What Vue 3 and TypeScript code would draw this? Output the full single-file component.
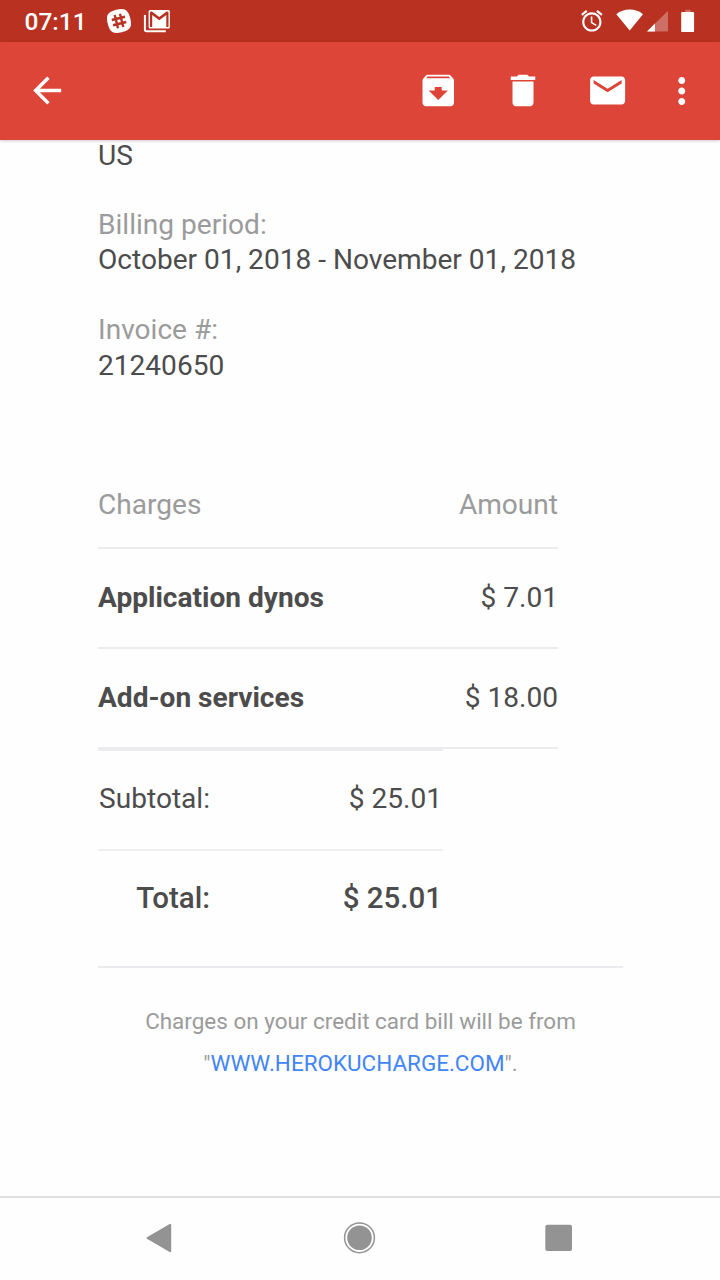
<script setup lang="ts">
interface Detail { label?: string; value: string }
interface Charge { name: string; amount: string }

const details: Detail[] = [
  { value: 'US' },
  { label: 'Billing period:', value: 'October 01, 2018 - November 01, 2018' },
  { label: 'Invoice #:', value: '21240650' },
]
const charges: Charge[] = [
  { name: 'Application dynos', amount: '$ 7.01' },
  { name: 'Add-on services', amount: '$ 18.00' },
]
const actions: { name: string; box: string; path: string }[] = [
  {
    name: 'archive',
    box: '-0.15 -0.25 24 24',
    path: 'M20.54 5.23l-1.39-1.68C18.88 3.21 18.47 3 18 3H6c-.47 0-.88.21-1.16.55L3.46 5.23C3.17 5.57 3 6.02 3 6.5V19c0 1.1.9 2 2 2h14c1.1 0 2-.9 2-2V6.5c0-.48-.17-.93-.46-1.27zM12 17.5L6.5 12H10v-2h4v2h3.5L12 17.5zM5.12 5l.81-1h12l.94 1H5.12z',
  },
  {
    name: 'delete',
    box: '0 -0.25 24 24',
    path: 'M6 19c0 1.1.9 2 2 2h8c1.1 0 2-.9 2-2V6.9H6V19zM19 4h-3.5l-1-1h-5l-1 1H5v2h14V4z',
  },
  {
    name: 'unread',
    box: '-0.35 -0.25 24 24',
    path: 'M20 4H4c-1.1 0-1.99.9-1.99 2L2 18c0 1.1.9 2 2 2h16c1.1 0 2-.9 2-2V6c0-1.1-.9-2-2-2zm0 4l-8 5-8-5V6l8 5 8-5v2z',
  },
  {
    name: 'more',
    box: '0.15 0 24 24',
    path: 'M12 8c1.1 0 2-.9 2-2s-.9-2-2-2-2 .9-2 2 .9 2 2 2zm0 2c-1.1 0-2 .9-2 2s.9 2 2 2 2-.9 2-2-.9-2-2-2zm0 6c-1.1 0-2 .9-2 2s.9 2 2 2 2-.9 2-2-.9-2-2-2z',
  },
]
</script>

<template>
  <div class="screen">
    <div class="status">
      <span class="clock">07:11</span>
      <svg class="slack" width="26" height="26" viewBox="0 0 26 26">
        <g transform="rotate(-14 13 13)">
          <path fill="#fff" d="M13 1.4C21.8 1.4 24.6 4.2 24.6 13S21.8 24.6 13 24.6 1.4 21.8 1.4 13 4.2 1.4 13 1.4z" />
          <path fill="none" stroke="#b83121" stroke-width="2.4" d="M10.3 6.2v13.6M15.7 6.2v13.6M6.2 10.3h13.6M6.2 15.7h13.6" />
        </g>
      </svg>
      <svg class="gmail" width="28" height="24" viewBox="-0.4 0 28 24">
        <path fill="none" stroke="#fff" stroke-width="2" d="M1.5 6v14.6q0 1.6 1.6 1.6H22.4" />
        <rect x="5.2" y="1" width="21.3" height="18.6" rx="1.6" fill="#fff" />
        <path fill="#b83121" d="M6.6 18V3.6q0-1.2 1.2-1.2h.7l7.35 5.5 7.35-5.5h.7q1.2 0 1.2 1.2V18h-2.2V6l-7.05 5.2L8.8 6v12z" />
      </svg>
      <svg class="alarm" width="25.7" height="25.7" viewBox="0 0 24 24">
        <path fill="#fff" d="M22 5.72l-4.6-3.86-1.29 1.53 4.6 3.86L22 5.72zM7.88 3.39L6.6 1.86 2 5.71l1.29 1.53 4.59-3.85zM12.5 8H11v6l4.75 2.85.75-1.23-4-2.37V8zM12 4c-4.97 0-9 4.03-9 9s4.02 9 9 9c4.97 0 9-4.03 9-9s-4.03-9-9-9zm0 16c-3.87 0-7-3.13-7-7s3.13-7 7-7 7 3.13 7 7-3.13 7-7 7z" />
      </svg>
      <svg class="signals" width="80" height="24" viewBox="0 0 80 24">
        <path fill="#fff" d="M.3 5.2C4 2.2 8.5.6 13.7.6S23.3 2.2 27 5.2L13.7 21.5z" />
        <path fill="#fff" fill-opacity=".3" d="M52 1.7V22.4H31z" />
        <path fill="#fff" d="M39 14.5V22.4H31z" />
        <path fill="#fff" fill-opacity=".3" d="M69.3.8h5.4v2.4h-5.4z" />
        <rect x="65.2" y="3.1" width="12.9" height="19.9" rx=".8" fill="#fff" />
      </svg>
    </div>

    <header class="toolbar">
      <svg class="back" width="42" height="42" viewBox="-0.1 -0.35 24 24">
        <path fill="#fff" d="M20 11H7.83l5.59-5.59L12 4l-8 8 8 8 1.41-1.41L7.83 13H20v-2z" />
      </svg>
      <svg v-for="a in actions" :key="a.name" :class="a.name" width="42" height="42" :viewBox="a.box">
        <path fill="#fff" :d="a.path" />
      </svg>
    </header>

    <main class="mail">
      <section class="details">
        <div v-for="d in details" :key="d.value" class="detail">
          <div v-if="d.label" class="muted">{{ d.label }}</div>
          <div>{{ d.value }}</div>
        </div>
      </section>

      <section class="charges">
        <div class="row head muted"><span>Charges</span><span>Amount</span></div>
        <div v-for="c in charges" :key="c.name" class="row">
          <b>{{ c.name }}</b><span>{{ c.amount }}</span>
        </div>
      </section>

      <section class="totals">
        <div class="sum"><span class="label">Subtotal:</span><span>$ 25.01</span></div>
        <div class="sum grand"><span class="label">Total:</span><span>$ 25.01</span></div>
      </section>

      <footer class="note">
        Charges on your credit card bill will be from<br />"<a>WWW.HEROKUCHARGE.COM</a>".
      </footer>
    </main>

    <nav class="navbar">
      <svg width="40" height="40" viewBox="0 0 40 40">
        <path fill="#939393" stroke="#939393" stroke-width="2" stroke-linejoin="round" d="M8.5 20L31.2 6.8V33.2z" />
      </svg>
      <svg width="40" height="40" viewBox="0 0 40 40">
        <circle cx="20.5" cy="19.8" r="14.9" fill="none" stroke="#939393" stroke-width="1.5" />
        <circle cx="20.5" cy="19.8" r="12.3" fill="#939393" />
      </svg>
      <svg width="40" height="40" viewBox="0 0 40 40">
        <rect x="6.3" y="6.8" width="26.7" height="26.3" rx="2" fill="#939393" />
      </svg>
    </nav>
  </div>
</template>

<style>
body { margin: 0; background: #fefefe; }
</style>

<style scoped>
.screen {
  width: 720px;
  height: 1280px;
  display: flex;
  flex-direction: column;
  overflow: hidden;
  background: #fefefe;
  color: #4c4c4c;
  font: 28.08px/35px Roboto, sans-serif;
}
svg { display: block; flex: none; }
.status {
  height: 42px;
  flex: none;
  box-sizing: border-box;
  padding: 0 24px;
  display: flex;
  align-items: flex-start;
  background: #b83121;
  color: #fff;
}
.clock { width: 82px; padding-top: 8px; font-size: 24.5px; line-height: 28px; font-weight: 500; text-indent: .5px; }
.slack { margin-top: 8px; }
.gmail { margin: 9px 0 0 11px; }
.alarm { margin: 8px 0 0 auto; }
.signals { margin: 9px 0 0 11.5px; }
.toolbar {
  height: 98px;
  flex: none;
  display: flex;
  align-items: center;
  box-sizing: border-box;
  padding: 0 17px 2px 26px;
  background: #dc4538;
  box-shadow: 0 1px 3px rgba(0, 0, 0, .2);
  z-index: 1;
}
.back { margin-right: auto; }
.delete { margin-left: 43px; }
.unread { margin-left: 42px; }
.more { margin: 1px 0 0 33px; }
.mail {
  flex: 1;
  min-height: 0;
  box-sizing: border-box;
  padding: 0 97px 0 98px;
  overflow: hidden;
}
.details { margin-top: -2px; }
.detail { margin-bottom: 35px; }
.detail:first-child { margin-bottom: 34px; }
.detail:last-child .muted { margin-bottom: 1px; }
.muted { color: #9b9b9b; }
.charges { width: 460px; padding-top: 34px; }
.row {
  height: 100px;
  box-sizing: border-box;
  display: flex;
  justify-content: space-between;
  align-items: center;
  padding-bottom: 2px;
  border-bottom: 2px solid #ebebf0;
}
.head { height: 97px; padding-top: 12px; }
.totals { width: 345px; border-top: 2px solid #ebebf0; }
.sum {
  height: 100px;
  box-sizing: border-box;
  display: flex;
  justify-content: space-between;
  align-items: center;
  padding: 0 1px 3px 0;
  border-bottom: 2px solid #efeff1;
}
.label { width: 112px; text-align: right; }
.grand { border: 0; height: 96px; padding-bottom: 2px; font-size: 29.5px; font-weight: 500; }
.note {
  margin-top: 19px;
  padding-top: 32px;
  border-top: 2px solid #ebebf0;
  text-align: center;
  color: #9b9b9b;
  font-size: 22.46px;
  line-height: 42px;
}
.note a { color: #4285f4; }
.navbar {
  height: 84px;
  flex: none;
  box-sizing: border-box;
  padding: 0 141px 2px 139px;
  display: flex;
  justify-content: space-between;
  align-items: center;
  border-top: 2px solid #e0e0e0;
}
</style>
